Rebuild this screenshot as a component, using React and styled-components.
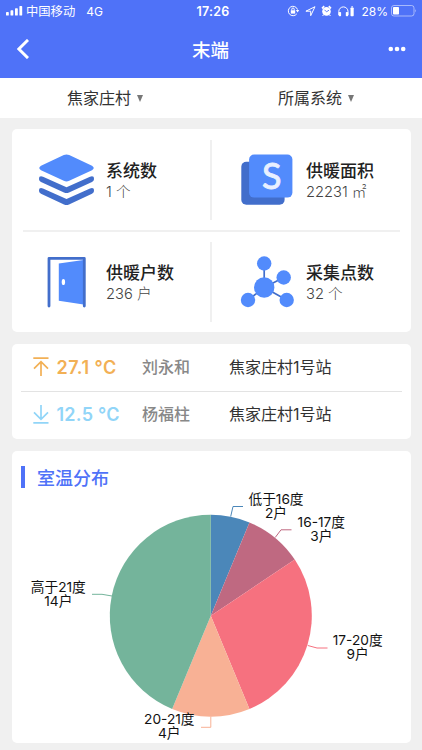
import React from "react";
import styled, { createGlobalStyle } from "styled-components";

const stats = [
  { id: 1, name: "系统数", value: "1 个", icon: "layers" },
  { id: 2, name: "供暖面积", value: "22231 ㎡", icon: "area" },
  { id: 3, name: "供暖户数", value: "236 户", icon: "door" },
  { id: 4, name: "采集点数", value: "32 个", icon: "nodes" },
];

const records = [
  { id: 1, type: "max", temp: "27.1 °C", user: "刘永和", station: "焦家庄村1号站" },
  { id: 2, type: "min", temp: "12.5 °C", user: "杨福柱", station: "焦家庄村1号站" },
];

const slices = [
  { name: "低于16度", count: 2, color: "#4b87b9", x: 276, y: 503.8, line: "230.7,516.5 233,506.5 243,506.5" },
  { name: "16-17度", count: 3, color: "#bf6981", x: 321.3, y: 526.9, line: "275.2,537.5 281,529.8 291.5,529.8" },
  { name: "17-20度", count: 9, color: "#f6717f", x: 357.7, y: 645.3, line: "307.8,645.5 317,648 327.5,648" },
  { name: "20-21度", count: 4, color: "#f8b195", x: 169.3, y: 724.2, line: "210.8,716.5 210.8,727.3 201,727.3" },
  { name: "高于21度", count: 14, color: "#74b49b", x: 58.3, y: 591.5, line: "112,596 102,594.3 92,594.3" },
];

const CX = 210.8;
const CY = 615.7;
const R = 101;

const getPoint = (ratio) => {
  const angle = ratio * Math.PI * 2 - Math.PI / 2;
  return `${CX + R * Math.cos(angle)} ${CY + R * Math.sin(angle)}`;
};

const LayersIcon = () => (
  <svg width="58" height="52" viewBox="0 0 58 52">
    <path d="M1.5 22.7Q3 21.8 5 22.8L28.5 33.3L52 22.8Q54 21.8 55.5 22.7Q56 23.5 56 25.3Q56 27 54 28L31 38.4Q28.5 39.5 26 38.4L3 28Q1 27 1 25.3Q1 23.5 1.5 22.7Z" fill="#426ecb" />
    <path d="M1.5 34.4Q3 33.5 5 34.5L28.5 45L52 34.5Q54 33.5 55.5 34.4Q56 35.2 56 37Q56 38.7 54 39.7L31 50.4Q28.5 51.5 26 50.4L3 39.7Q1 38.7 1 37Q1 35.2 1.5 34.4Z" fill="#426ecb" />
    <path d="M25.8 1.1Q28.5 -.2 31.2 1.1L54 11.7Q57.5 14 54 16.2L31.2 26.8Q28.5 28 25.8 26.8L3 16.2Q-.5 14 3 11.7Z" fill="#528bfc" />
  </svg>
);

const AreaIcon = () => (
  <svg width="52" height="52" viewBox="0 0 52 52">
    <rect x="0.3" y="7.8" width="43.3" height="43" rx="5" fill="#426ecb" />
    <rect x="8.1" y="0.6" width="43.3" height="43" rx="5" fill="#528bfc" />
    <SLetter x="30.7" y="35.4">S</SLetter>
  </svg>
);

const DoorIcon = () => (
  <svg width="40" height="52" viewBox="0 0 40 52">
    <path d="M11.8 7.6L36.5 4V48.6L11.8 44.8Z" fill="#528bfc" />
    <path d="M2 50V2.3H37.3V50" fill="none" stroke="#426ecb" strokeWidth="2.8" strokeLinecap="round" strokeLinejoin="round" />
    <ellipse cx="16.4" cy="26" rx="1.7" ry="3.1" fill="#fff" />
  </svg>
);

const NodesIcon = () => (
  <svg width="54" height="52" viewBox="-0.7 0 54 52">
    <path d="M23.5 31.5V8M23.5 31.5L43 21.5M23.5 31.5L46 44M23.5 31.5L7.5 44" stroke="#426ecb" strokeWidth="1.7" />
    <g fill="#528bfc">
      <circle cx="23.5" cy="31.5" r="10.2" />
      <circle cx="23.5" cy="7.5" r="7.2" />
      <circle cx="43" cy="21.5" r="7.2" />
      <circle cx="46" cy="44" r="7.2" />
      <circle cx="7.3" cy="44" r="7.2" />
    </g>
  </svg>
);

const icons = { layers: LayersIcon, area: AreaIcon, door: DoorIcon, nodes: NodesIcon };

const TempIcon = ({ type }) => (
  <svg width="16" height="20" viewBox="0 0 16 20" fill="none" stroke="currentColor" strokeWidth="1.7">
    {type === "max" ? (
      <path d="M.3 1.2H15.5M8 19V4.8M1 11.6L8 4.6L15 11.6" />
    ) : (
      <path d="M.3 18.8H15.5M8 1V15.2M1 8.4L8 15.4L15 8.4" />
    )}
  </svg>
);

const StatusIcons = () => (
  <svg width="70" height="14" viewBox="0 0 70 14" fill="none" stroke="#fff" strokeWidth="1">
    <path d="M9.8 9.8A4.7 4.7 0 1 1 10.5 5.6" />
    <path d="M8.9 6.1H12.2L10.6 8.4Z" fill="#fff" stroke="none" />
    <rect x="3.8" y="6.3" width="4.4" height="3.3" fill="#fff" stroke="none" />
    <path d="M4.8 6.5V5.2A1.2 1.2 0 0 1 7.2 5.2V6.5" />
    <path d="M18.9 7.2L28 2.7L23.7 11.7V7.2Z" strokeLinejoin="round" />
    <circle cx="39.5" cy="7.4" r="4.3" fill="#fff" stroke="none" />
    <path d="M35 4.3L37.2 2.2M44 4.3L41.8 2.2" strokeWidth="1.6" />
    <path d="M36.6 10.6L35.6 12M42.4 10.6L43.4 12" />
    <path d="M37.5 5.8L39.5 7.8L42 6.2" stroke="#4f72f8" strokeWidth=".9" />
    <path d="M51.8 11V7.5A4.6 4.6 0 0 1 61 7.5V11" />
    <rect x="51.7" y="8" width="2.4" height="4.3" rx=".8" fill="#fff" stroke="none" />
    <rect x="58.8" y="8" width="2.4" height="4.3" rx=".8" fill="#fff" stroke="none" />
    <rect x="63.5" y="3.5" width="3.2" height="8.8" rx=".7" fill="#fff" stroke="none" />
    <rect x="64.4" y="2.2" width="1.4" height="1.2" fill="#fff" stroke="none" />
  </svg>
);

const PieChart = () => {
  const total = slices.reduce((sum, slice) => sum + slice.count, 0);
  let passed = 0;

  return (
    <Chart viewBox="12 490 398 252">
      {slices.map((slice) => {
        const start = passed / total;
        passed += slice.count;
        return (
          <path
            key={slice.name}
            d={`M${CX} ${CY}L${getPoint(start)}A${R} ${R} 0 0 1 ${getPoint(passed / total)}Z`}
            fill={slice.color}
          />
        );
      })}
      {slices.map((slice) => (
        <g key={slice.name}>
          <polyline points={slice.line} fill="none" stroke={slice.color} />
          <ChartLabel y={slice.y}>
            <tspan x={slice.x}>{slice.name}</tspan>
            <tspan x={slice.x} dy="14">{slice.count}户</tspan>
          </ChartLabel>
        </g>
      ))}
    </Chart>
  );
};

const App = () => {
  return (
    <Wrapper>
      <GlobalStyle />
      <Header>
        <StatusBar>
          <Carrier>
            <svg width="17" height="10" viewBox="0 0 17 10" fill="#fff">
              <rect x="0" y="6" width="2.8" height="3.6" rx=".7" />
              <rect x="4.5" y="4.3" width="2.8" height="5.3" rx=".7" />
              <rect x="9" y="2.3" width="2.8" height="7.3" rx=".7" />
              <rect x="13.4" y="0" width="2.8" height="9.6" rx=".7" />
            </svg>
            <CarrierName>中国移动</CarrierName>
            <Network>4G</Network>
          </Carrier>
          <Clock>17:26</Clock>
          <StatusRight>
            <StatusIcons />
            <Percent>28%</Percent>
            <svg width="26" height="12" viewBox="0 0 26 12">
              <rect x=".5" y=".5" width="22.5" height="10.5" rx="2.4" fill="none" stroke="#fff" strokeOpacity=".5" />
              <rect x="2" y="2" width="6" height="7.5" rx=".8" fill="#fff" />
              <path d="M24.2 4Q26 5.7 24.2 7.5Z" fill="#fff" fillOpacity=".5" />
            </svg>
          </StatusRight>
        </StatusBar>
        <NavBar>
          <svg width="12" height="20" viewBox="0 0 12 20" fill="none" stroke="#fff" strokeWidth="2.9">
            <path d="M11 .9L1.9 10L11 19.1" />
          </svg>
          <NavTitle>末端</NavTitle>
          <svg width="18" height="6" viewBox="0 0 18 6" fill="#fff">
            <circle cx="2.8" cy="3" r="2.3" />
            <circle cx="9" cy="3" r="2.3" />
            <circle cx="15.2" cy="3" r="2.3" />
          </svg>
        </NavBar>
      </Header>

      <FilterBar>
        {["焦家庄村", "所属系统"].map((name) => (
          <Filter key={name}>
            {name}
            <Caret />
          </Filter>
        ))}
      </FilterBar>

      <Content>
        <StatCard>
          {stats.map((stat) => {
            const Icon = icons[stat.icon];
            return (
              <Stat key={stat.id} $bottom={stat.id > 2} $right={stat.id % 2 === 0}>
                <IconBox><Icon /></IconBox>
                <StatText>
                  <StatName>{stat.name}</StatName>
                  <StatValue>{stat.value}</StatValue>
                </StatText>
              </Stat>
            );
          })}
        </StatCard>

        <RecordCard>
          {records.map((record) => (
            <Record key={record.id}>
              <Temp $type={record.type}>
                <TempIcon type={record.type} />
                {record.temp}
              </Temp>
              <User>{record.user}</User>
              <Station>{record.station}</Station>
            </Record>
          ))}
        </RecordCard>

        <ChartCard>
          <ChartTitle>室温分布</ChartTitle>
          <PieChart />
        </ChartCard>
      </Content>
    </Wrapper>
  );
};

export default App;

const GlobalStyle = createGlobalStyle`
  * {
    box-sizing: border-box;
  }
  body {
    margin: 0;
    background: #f0f0f0;
    font-family: Inter, "Noto Sans CJK SC", sans-serif;
  }
  svg {
    display: block;
    flex-shrink: 0;
  }
`;

const Wrapper = styled.div`
  width: 422px;
  height: 750px;
  overflow: hidden;
  background: #f0f0f0;
`;

const Header = styled.header`
  height: 78px;
  color: #fff;
  background: #4f72f8;
`;

const StatusBar = styled.div`
  display: grid;
  grid-template-columns: 1fr auto 1fr;
  align-items: center;
  height: 22px;
  padding: 0 5px 0 6px;
  font-size: 12px;
`;

const Carrier = styled.div`
  display: flex;
  align-items: center;
`;

const CarrierName = styled.span`
  margin-left: 3px;
  font-size: 12.3px;
`;

const Network = styled.span`
  margin-left: 11px;
`;

const Clock = styled.span`
  padding-left: 3px;
  font-size: 12.5px;
  font-weight: 600;
  letter-spacing: 0.2px;
`;

const StatusRight = styled.div`
  display: flex;
  align-items: center;
  justify-content: flex-end;
`;

const Percent = styled.span`
  margin: 0 3px 0 4px;
`;

const NavBar = styled.div`
  display: flex;
  align-items: center;
  justify-content: space-between;
  height: 54px;
  padding: 0 16px 0 17px;
`;

const NavTitle = styled.div`
  padding-left: 4px;
  font-size: 18.5px;
  font-weight: 500;
`;

const FilterBar = styled.div`
  display: grid;
  grid-template-columns: 1fr 1fr;
  height: 40px;
  background: #fff;
`;

const Filter = styled.div`
  display: flex;
  align-items: center;
  justify-content: center;
  gap: 6px;
  padding-bottom: 2px;
  padding-right: 1px;
  color: #333;
  font-size: 16px;
`;

const Caret = styled.span`
  margin-top: 2px;
  border: 3px solid transparent;
  border-top: 7px solid #777;
  border-bottom: 0;
`;

const Content = styled.div`
  display: flex;
  flex-direction: column;
  gap: 12px;
  padding: 11px 11.5px 0 12px;
`;

const Card = styled.section`
  border-radius: 5px;
  background: #fff;
`;

const StatCard = styled(Card)`
  display: grid;
  grid-template-columns: 189px 1fr;
  grid-template-rows: 103px 100px;
  padding: 0 11px;
`;

const Stat = styled.div`
  display: flex;
  align-items: center;
  padding-bottom: ${(props) => (props.$bottom ? "0" : "1px")};
  padding-left: ${(props) => (props.$right ? "11px" : "0")};
  background:
    linear-gradient(#f0f0f0, #f0f0f0) 100% ${(props) => (props.$bottom ? "10px" : "11px")} / ${(props) => (props.$right ? "0" : "2px")} 80px no-repeat,
    linear-gradient(#f0f0f0, #f0f0f0) 0 100% / 100% ${(props) => (props.$bottom ? "0" : "2px")} no-repeat;
`;

const IconBox = styled.div`
  display: flex;
  justify-content: center;
  width: 88px;
  margin-right: -5px;
`;

const StatText = styled.div`
  padding-top: 3px;
`;

const StatName = styled.div`
  color: #222;
  font-size: 17px;
  font-weight: 500;
  line-height: 21px;
`;

const StatValue = styled.div`
  color: #444;
  font-size: 14.7px;
  font-weight: 300;
  line-height: 20px;
`;

const SLetter = styled.text`
  fill: #e8f0ff;
  stroke: #e8f0ff;
  stroke-width: 0.9px;
  font-family: Lato, sans-serif;
  font-size: 36px;
  text-anchor: middle;
`;

const RecordCard = styled(Card)`
  padding: 0 9px;
`;

const Record = styled.div`
  display: grid;
  grid-template-columns: 109px 87px 1fr;
  align-items: center;
  height: 47px;
  padding: 0 0 3px 12px;
  font-size: 16px;

  & + & {
    height: 48px;
    padding-bottom: 5px;
    border-top: 1px solid #e3e3e3;
  }
`;

const Temp = styled.div`
  display: flex;
  align-items: center;
  gap: 7.5px;
  padding-top: 2px;
  color: ${(props) => (props.$type === "max" ? "#f2b055" : "#91d5f8")};
  font-size: 18px;
  font-weight: 600;
  letter-spacing: ${(props) => (props.$type === "max" ? "0.5px" : "0.25px")};
`;

const User = styled.div`
  color: #888;
  font-weight: 500;
`;

const Station = styled.div`
  color: #333;
`;

const ChartCard = styled(Card)`
  height: 291.5px;
`;

const ChartTitle = styled.h2`
  display: flex;
  align-items: center;
  gap: 12px;
  height: 39px;
  margin: 0;
  padding: 13px 0 0 8.5px;
  color: #4f72f8;
  font-size: 18px;
  font-weight: 500;

  &::before {
    content: "";
    width: 4.5px;
    height: 22px;
    background: #4f72f8;
  }
`;

const Chart = styled.svg`
  width: 398px;
  height: 252px;
`;

const ChartLabel = styled.text`
  fill: #111;
  font-size: 13.7px;
  text-anchor: middle;
`;
